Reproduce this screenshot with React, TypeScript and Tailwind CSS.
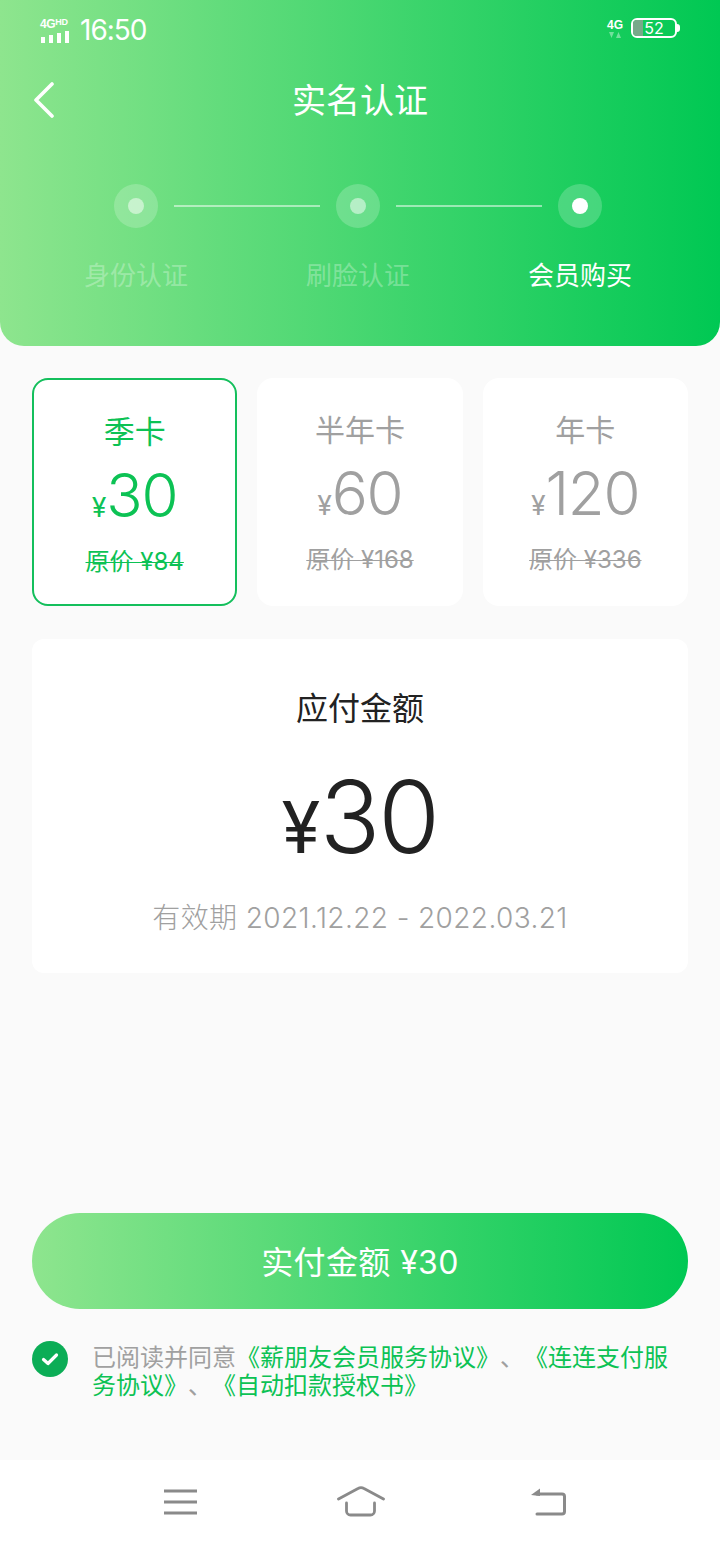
import { ReactNode } from "react";

const cjk = "font-['Roboto','Noto_Sans_CJK_SC',sans-serif]";
const mixed = "font-['Inter','Noto_Sans_CJK_SC',sans-serif]";

const steps = [
  { label: "身份认证", active: false },
  { label: "刷脸认证", active: false },
  { label: "会员购买", active: true },
];

const plans = [
  { name: "季卡", price: "30", origin: "原价 ¥84", selected: true },
  { name: "半年卡", price: "60", origin: "原价 ¥168", selected: false },
  { name: "年卡", price: "120", origin: "原价 ¥336", selected: false },
];

function StatusBar() {
  return (
    <div className="flex h-[58px] items-center justify-between pl-10 pr-10 pt-[2px] text-white">
      <div className="flex items-center gap-[10px]">
        <div className="flex w-[30px] flex-col">
          <div className="flex items-start font-['Liberation_Sans',sans-serif] font-bold leading-none">
            <span className="text-[12px] leading-[12px] tracking-[-0.4px]">4G</span>
            <span className="text-[9px] leading-[9px] tracking-[-0.2px]">HD</span>
          </div>
          <svg width="30" height="13" viewBox="0 0 30 13" fill="#fff">
            <rect x="1" y="7" width="4" height="6" />
            <rect x="9" y="5" width="4" height="8" />
            <rect x="17" y="3" width="4" height="10" />
            <rect x="25" y="1" width="4" height="12" />
          </svg>
        </div>
        <span className="font-['Inter',sans-serif] text-[28px] font-normal leading-none tracking-[-1px]">16:50</span>
      </div>
      <div className="-mt-[4px] flex items-center gap-[8px]">
        <div className="flex w-4 flex-col items-center">
          <span className="font-['Liberation_Sans',sans-serif] text-[12px] font-bold leading-[12px]">4G</span>
          <svg className="mt-[1px]" width="12" height="6" viewBox="0 0 12 6" fill="#fff" fillOpacity="0.4">
            <path d="M0 0h5L2.5 6Z" />
            <path d="M9.5 0 12 6H7Z" />
          </svg>
        </div>
        <div className="flex items-center">
          <div className="relative flex h-[20px] w-[46px] items-center justify-center overflow-hidden rounded-[6px] border-2 border-white">
            <span className="absolute inset-y-0 left-0 w-[10px] bg-[#78a98a]" />
            <span className="relative font-['Inter',sans-serif] text-[16px] leading-none">52</span>
          </div>
          <span className="h-[8px] w-[3px] rounded-r-sm bg-white" />
        </div>
      </div>
    </div>
  );
}

function Header() {
  return (
    <div className={`h-[346px] rounded-b-[24px] bg-[linear-gradient(90deg,#8ee58e,#00c853)] ${cjk}`}>
      <StatusBar />
      <div className="relative flex h-[84px] items-center justify-center pt-[2px]">
        <svg className="absolute left-[32px] top-[24px]" width="24" height="36" viewBox="0 0 24 36" fill="none">
          <path d="M20 2 4 18l16 16" stroke="#fff" strokeWidth="3.6" strokeLinecap="round" strokeLinejoin="round" />
        </svg>
        <span className="text-[34px] leading-none text-white">实名认证</span>
      </div>
      <div className="mt-[42px] grid grid-cols-[repeat(3,222px)] pl-[25px]">
        {steps.map((s, i) => (
          <div key={s.label} className="flex flex-col items-center">
            <div className="relative flex h-[44px] w-full items-center justify-center">
              <span className="flex h-[44px] w-[44px] items-center justify-center rounded-full bg-white/20">
                <span className={`h-4 w-4 rounded-full ${s.active ? "bg-white" : "bg-white/50"}`} />
              </span>
              {i < 2 && (
                <span className="absolute left-[calc(50%+38px)] top-[21px] h-[2px] w-[146px] bg-white/50" />
              )}
            </div>
            <span className={`mt-[32px] text-[26px] leading-[32px] ${s.active ? "text-white" : "text-white/30"}`}>
              {s.label}
            </span>
          </div>
        ))}
      </div>
    </div>
  );
}

function PlanCard({ name, price, origin, selected }: (typeof plans)[number]) {
  const color = selected ? "text-[#0cc254]" : "text-[#a0a0a0]";
  return (
    <div
      className={`flex h-[228px] flex-col items-center rounded-[16px] bg-white ${color} ${
        selected ? "border-2 border-[#14bf5c]" : ""
      }`}
    >
      <div className="flex flex-col items-center pt-[35px]">
        <span className={`leading-[36px] ${selected ? "text-[31px]" : "text-[30px]"}`}>{name}</span>
        <div className="mt-[8px] flex items-baseline">
          <span className="text-[27px] leading-none">¥</span>
          <span className="font-['Inter',sans-serif] text-[60px] font-light leading-[72px] tracking-[-1.2px]">{price}</span>
        </div>
        <span className={`mt-[16px] text-[24px] leading-[30px] line-through decoration-1 ${mixed}`}>{origin}</span>
      </div>
    </div>
  );
}

function Wrap({ children }: { children: ReactNode }) {
  return <div className="px-[32px]">{children}</div>;
}

export default function App() {
  return (
    <div className={`flex h-[1544px] w-[720px] flex-col overflow-hidden bg-[#fafafa] ${cjk}`}>
      <Header />
      <Wrap>
        <div className="mt-[32px] grid grid-cols-3 gap-[20px]">
          {plans.map((p) => (
            <PlanCard key={p.name} {...p} />
          ))}
        </div>
        <div className="mt-[33px] flex h-[334px] flex-col items-center rounded-[12px] bg-white">
          <span className="mt-[48px] text-[32px] leading-[44px] text-[#222]">应付金额</span>
          <div className="mt-[24px] flex items-baseline text-[#222]">
            <span className="text-[72px] leading-none">¥</span>
            <span className="font-['Inter',sans-serif] text-[100px] font-light leading-[124px] tracking-[-2px]">30</span>
          </div>
          <span className={`mt-[21px] text-[28px] font-light leading-[36px] tracking-[0.4px] text-[#a0a0a0] ${mixed}`}>
            有效期 2021.12.22 - 2022.03.21
          </span>
        </div>
        <div className={`mt-[240px] flex h-[96px] items-center justify-center rounded-full bg-[linear-gradient(90deg,#8ee58e,#00c853)] pt-[4px] text-[32px] tracking-[0.4px] text-white ${mixed}`}>
          实付金额 ¥30
        </div>
        <div className="mt-[32px] flex gap-[24px]">
          <span className="flex h-[36px] w-[36px] shrink-0 items-center justify-center rounded-full bg-[#0bad56]">
            <svg width="18" height="14" viewBox="0 0 18 14" fill="none">
              <path d="M2.5 7.5 7 11.5 15.5 3" stroke="#fff" strokeWidth="3.2" strokeLinecap="round" strokeLinejoin="round" />
            </svg>
          </span>
          <p className="pt-[3px] text-[24px] leading-[28px] text-[#a0a0a0] [text-spacing-trim:space-all]">
            已阅读并同意
            <span className="text-[#0cc254]">《薪朋友会员服务协议》</span>、
            <span className="text-[#0cc254]">《连连支付服务协议》</span>、
            <span className="text-[#0cc254]">《自动扣款授权书》</span>
          </p>
        </div>
      </Wrap>
      <div className="mt-auto flex h-[84px] items-center bg-white pl-[164px]">
        <svg width="34" height="28" viewBox="0 0 34 28" fill="none" stroke="#8a8a8a" strokeWidth="3">
          <path d="M0 3h33M0 14h33M0 25h33" />
        </svg>
        <svg className="ml-[139px]" width="48" height="32" viewBox="0 0 48 32" fill="none" stroke="#8a8a8a" strokeWidth="2.8" strokeLinecap="round" strokeLinejoin="round">
          <path d="M1.5 13 21 2.5a6 6 0 0 1 6 0L46.5 13" />
          <path d="M9.5 17v8a4 4 0 0 0 4 4h20a4 4 0 0 0 4-4v-8" />
        </svg>
        <svg className="ml-[145px]" width="36" height="30" viewBox="0 0 36 30" fill="none">
          <path d="M7 7h25a2.5 2.5 0 0 1 2.5 2.5v15A2.5 2.5 0 0 1 32 27H7" stroke="#8a8a8a" strokeWidth="3" strokeLinecap="round" />
          <path d="M1 8 10 1.5V9Z" fill="#8a8a8a" />
        </svg>
      </div>
    </div>
  );
}
